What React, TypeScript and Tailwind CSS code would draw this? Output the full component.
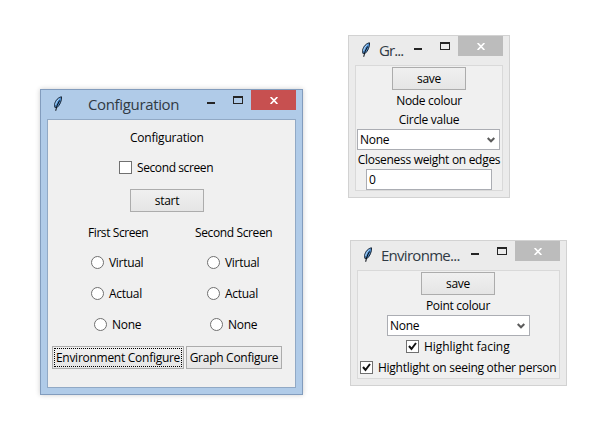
import type { ReactNode } from "react";

function Feather() {
  return (
    <svg className="h-[15px] w-[10px] shrink-0" viewBox="0 0 10 15" aria-hidden="true">
      <path d="M8.500.8C5.500 1.200 2.200 4.500 1.700 8.200L1.800 11.300 4.200 11.400C6.900 9 8.800 4.800 8.500.8Z" fill="#5296dc" stroke="#17222f" strokeWidth="1" />
      <path d="M6.300 2.600C4.500 4 3 6.300 2.600 8.800" fill="none" stroke="#b5d8f5" strokeWidth="1" />
      <path d="M6.600 4.500C4.800 7.300 3.300 10 2.700 14.800" fill="none" stroke="#0c1118" strokeWidth="1.100" />
    </svg>
  );
}

function Label({ children, className = "" }: { children: ReactNode; className?: string }) {
  return <span className={`block whitespace-nowrap text-black ${className}`}>{children}</span>;
}

function TitleBar({ title, titleClass, active = false }: { title: string; titleClass: string; active?: boolean }) {
  return (
    <div className="flex h-[29px] items-start pr-[6px]">
      <div className="pt-[6px]"><Feather /></div>
      <span className={`whitespace-nowrap pt-[4px] text-[15px] leading-5 text-[#303a44] ${titleClass}`}>{title}</span>
      <div className="ml-auto flex items-start">
        <span className="mt-[12px] h-[2px] w-[8px] bg-[#252525]" />
        <span className="ml-[18px] mt-[6px] h-[8px] w-[10px] border border-t-2 border-[#252525]" />
        <span className={`ml-[8px] flex h-5 w-[45px] items-center justify-center ${active ? "bg-[#c75050]" : "bg-[#bcbcbc]"}`}>
          <svg className="h-[7px] w-[8px]" viewBox="0 0 8 7" fill="none" stroke="white" strokeWidth="1.700" aria-hidden="true">
            <path d="M.6 0 7.400 7M7.400 0 .6 7" />
          </svg>
        </span>
      </div>
    </div>
  );
}

function Button({ children, className = "" }: { children: ReactNode; className?: string }) {
  return (
    <button className={`flex h-[23px] items-center justify-center whitespace-nowrap border border-[#acacac] bg-linear-to-b from-[#f0f0f0] to-[#e5e5e5] text-black ${className}`}>
      {children}
    </button>
  );
}

function Check({ label, checked = false, className = "", labelClass = "" }: { label: string; checked?: boolean; className?: string; labelClass?: string }) {
  return (
    <label className={`flex h-[13px] items-center gap-[5px] ${className}`}>
      <span className="size-[13px] shrink-0 border border-[#707070] bg-white">
        {checked && (
          <svg className="size-[11px]" viewBox="0 0 11 11" fill="none" stroke="#111" strokeWidth="2" aria-hidden="true">
            <path d="M2 5 4.500 8 9 2" />
          </svg>
        )}
      </span>
      <Label className={labelClass}>{label}</Label>
    </label>
  );
}

function Radio({ label, className = "" }: { label: string; className?: string }) {
  return (
    <label className={`flex h-[13px] items-center gap-[5px] ${className}`}>
      <span className="size-[13px] shrink-0 rounded-full border border-[#707070] bg-white" />
      <Label>{label}</Label>
    </label>
  );
}

function Select() {
  return (
    <div className="flex h-[21px] w-[143px] items-center justify-between border border-[#abadb3] bg-white pl-[2px] pr-[4px]">
      <Label>None</Label>
      <svg className="h-[6px] w-[8px]" viewBox="0 0 8 6" fill="none" stroke="#5b5b5b" strokeWidth="2" aria-hidden="true">
        <path d="M.7 1 4 4.300 7.300 1" />
      </svg>
    </div>
  );
}

function ScreenChoices({ title, className, titleClass }: { title: string; className: string; titleClass: string }) {
  return (
    <div className={className}>
      <Label className={`h-4 ${titleClass}`}>{title}</Label>
      <Radio label="Virtual" className="mt-[15px] ml-[3px]" />
      <Radio label="Actual" className="mt-[18px] ml-[3px]" />
      <Radio label="None" className="mt-[18px] ml-[6px]" />
    </div>
  );
}

export default function App() {
  return (
    <main className="relative h-[434px] w-[603px] overflow-hidden bg-white font-['Open_Sans','Noto_Sans',sans-serif] text-[12px] leading-4 tracking-[-0.3px]">
      <section className="absolute left-[40px] top-[89px] h-[306px] w-[263px] border border-[#829cbd] bg-[#b0cbe8] pl-[6px] shadow-[0_0_5px_rgba(0,0,0,0.2)]">
        <div className="pl-[6px]"><TitleBar active title="Configuration" titleClass="pl-[25px] tracking-[-0.35px]" /></div>
        <div className="h-[269px] w-[249px] border border-[#91a9c5] bg-[#f0f0f0]">
          <Label className="ml-[82px] mt-[10px] h-4 tracking-[-0.22px]">Configuration</Label>
          <Check label="Second screen" className="ml-[71px] mt-[15px]" labelClass="tracking-[-0.4px]" />
          <Button className="ml-[82px] mt-[15px] w-[74px]">start</Button>
          <div className="mt-[13px] flex">
            <ScreenChoices title="First Screen" className="ml-[40px] w-[107px]" titleClass="tracking-[-0.42px]" />
            <ScreenChoices title="Second Screen" className="ml-[9px]" titleClass="-ml-[9px] tracking-[-0.38px]" />
          </div>
          <div className="ml-[4px] mt-[15px] flex gap-[2px]">
            <Button className="relative w-[132px] tracking-[-0.27px] after:absolute after:inset-[1px] after:border after:border-dotted after:border-black">Environment Configure</Button>
            <Button className="w-[96px] tracking-[-0.28px]">Graph Configure</Button>
          </div>
        </div>
      </section>

      <section className="absolute left-[348px] top-[35px] h-[163px] w-[162px] border border-[#d2d2d2] bg-[#ebebeb] pl-[6px]">
        <div className="pl-[6px]"><TitleBar title="Gr..." titleClass="pl-[8px] tracking-[-0.9px]" /></div>
        <div className="flex h-[126px] w-[148px] flex-col items-center border border-[#d9d9d9] bg-[#f0f0f0] pt-px">
          <Button className="w-[74px]">save</Button>
          <Label className="mt-[3px] h-4">Node colour</Label>
          <Label className="mt-[3px] h-4">Circle value</Label>
          <div className="mr-px mt-px"><Select /></div>
          <Label className="mt-[2px] h-4">Closeness weight on edges</Label>
          <div className="mt-px h-[21px] w-[126px] border border-[#abadb3] bg-white pl-[2px] pt-[2px]"><Label>0</Label></div>
        </div>
      </section>

      <section className="absolute left-[350px] top-[240px] h-[146px] w-[217px] border border-[#d2d2d2] bg-[#ebebeb] pl-[6px]">
        <div className="pl-[6px]"><TitleBar title="Environme..." titleClass="pl-[8px] tracking-[-0.72px]" /></div>
        <div className="flex h-[109px] w-[203px] flex-col items-center border border-[#d9d9d9] bg-[#f0f0f0] pt-px">
          <Button className="mr-px w-[74px]">save</Button>
          <Label className="mr-px mt-[3px] h-4">Point colour</Label>
          <div className="mt-px"><Select /></div>
          <Check checked label="Highlight facing" className="mt-[4px] ml-[48px] self-start" labelClass="tracking-[-0.05px]" />
          <Check checked label="Hightlight on seeing other person" className="mt-[8px] ml-[2px] self-start" labelClass="tracking-[-0.27px]" />
        </div>
      </section>
    </main>
  );
}
